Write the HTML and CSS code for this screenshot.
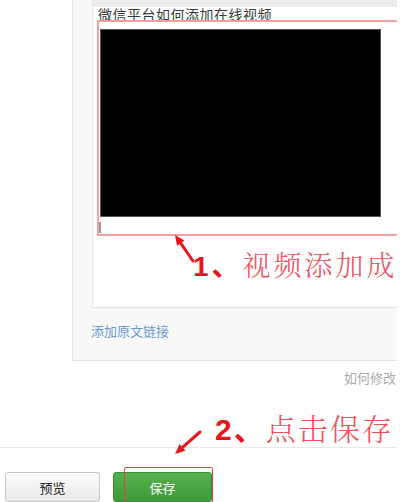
FILE: index.html
```html
<!DOCTYPE html>
<html lang="zh-CN">
<head>
  <meta charset="UTF-8">
  <title>添加视频</title>
  <link rel="stylesheet" href="styles.css">
</head>
<body>
  <div class="page">
    <div class="panel">
      <div class="editor">
        <div class="toolbar"></div>
        <div class="doc-title">微信平台如何添加在线视频</div>
        <div class="video-frame">
          <div class="video"></div>
          <div class="caret"></div>
        </div>
        <div class="note note-one"><b>1、</b>视频添加成</div>
      </div>
      <a class="source-link" href="#">添加原文链接</a>
    </div>

    <div class="hint">如何修改</div>

    <div class="note note-two"><b>2、</b>点击保存</div>

    <div class="footer">
      <button class="btn btn-preview">预览</button>
      <button class="btn btn-save">保存</button>
    </div>

    <!-- annotation arrows -->
    <svg class="arrows" width="400" height="502" viewBox="0 0 400 502">
      <line x1="193" y1="261" x2="180.7" y2="243.2" stroke="#e8141e" stroke-width="3" stroke-linecap="round"/>
      <polygon points="175,235 184.4,240.6 177,245.8" fill="#e8141e"/>
      <line x1="200" y1="432" x2="182.5" y2="447.4" stroke="#e8141e" stroke-width="3" stroke-linecap="round"/>
      <polygon points="175,454 185.5,450.8 179.5,444" fill="#e8141e"/>
    </svg>
  </div>
</body>
</html>
```

FILE: styles.css
```css
* {
  margin: 0;
  padding: 0;
  box-sizing: border-box;
}

body {
  font-family: 'Noto Sans CJK SC', 'Liberation Sans', sans-serif;
  background-color: #fff;
  color: #333;
  width: 400px;
  height: 502px;
  overflow: hidden;
}

.page {
  position: relative;
  width: 397px;
  height: 502px;
  overflow: hidden;
}

/* Article panel */
.panel {
  margin-left: 72px;
  width: 360px;
  padding-left: 19px;
  padding-bottom: 21px;
  background-color: #f8f8f8;
  border-left: 1px solid #e6e6e6;
  border-bottom: 1px solid #e3e3e3;
}

.editor {
  background-color: #fff;
  border-left: 1px solid #e4e4e4;
  border-bottom: 1px solid #e2e2e2;
  height: 308px;
}

.toolbar {
  height: 7px;
  background-color: #ececec;
}

.doc-title {
  padding-left: 5px;
  font-size: 14px;
  line-height: 14px;
  height: 13px;
  letter-spacing: 0.5px;
  color: #3a3a3a;
  white-space: nowrap;
}

.video-frame {
  position: relative;
  margin-left: 4px;
  width: 320px;
  padding: 7px 0 1px 0;
  border: 2px solid #f4a0a2;
}

.video {
  margin-left: 1px;
  width: 281px;
  height: 188px;
  background-color: #000;
  border: 1px solid #555;
}

.caret {
  margin-top: 5px;
  width: 2px;
  height: 11px;
  background-color: #999;
}

/* Red notes */
.note {
  font-family: 'Noto Serif CJK SC', 'Noto Sans CJK SC', serif;
  font-weight: 300;
  color: #f0505c;
  white-space: nowrap;
}

.note b {
  font-family: 'Liberation Sans', 'Noto Sans CJK SC', sans-serif;
  font-weight: bold;
  color: #e8141e;
}

.note-one {
  margin-top: 12px;
  padding-left: 100px;
  font-size: 28px;
  line-height: 32px;
  letter-spacing: 3px;
}

.note-two {
  margin-top: 24px;
  padding-left: 215px;
  font-size: 30px;
  line-height: 34px;
  letter-spacing: 2px;
}

.source-link {
  display: block;
  margin-top: 15px;
  margin-left: -1px;
  font-size: 13px;
  line-height: 16px;
  color: #6a9ad0;
  text-decoration: none;
}

.hint {
  margin-top: 9px;
  padding-left: 344px;
  font-size: 13px;
  line-height: 16px;
  color: #aaa;
  white-space: nowrap;
}

/* Bottom bar */
.footer {
  display: flex;
  gap: 13px;
  padding: 24px 0 0 5px;
  border-top: 1px solid #e8e8e8;
  width: 400px;
}

.btn {
  height: 30px;
  font-family: 'Noto Sans CJK SC', sans-serif;
  font-size: 13px;
  border-radius: 3px;
  cursor: pointer;
}

.btn-preview {
  width: 95px;
  color: #222;
  background: linear-gradient(#fbfbfb, #e9e9e9);
  border: 1px solid #c8c8c8;
}

.btn-save {
  position: relative;
  width: 99px;
  color: #fff;
  background: linear-gradient(#56b04e, #3f9a3a);
  border: 1px solid #3a8c35;
}

.btn-save::after {
  content: '';
  position: absolute;
  left: 10px;
  top: -6px;
  right: -2px;
  bottom: -2px;
  border: 1.5px solid #e0403e;
  border-radius: 2px;
}

.arrows {
  position: absolute;
  left: 0;
  top: 0;
  pointer-events: none;
}
```
